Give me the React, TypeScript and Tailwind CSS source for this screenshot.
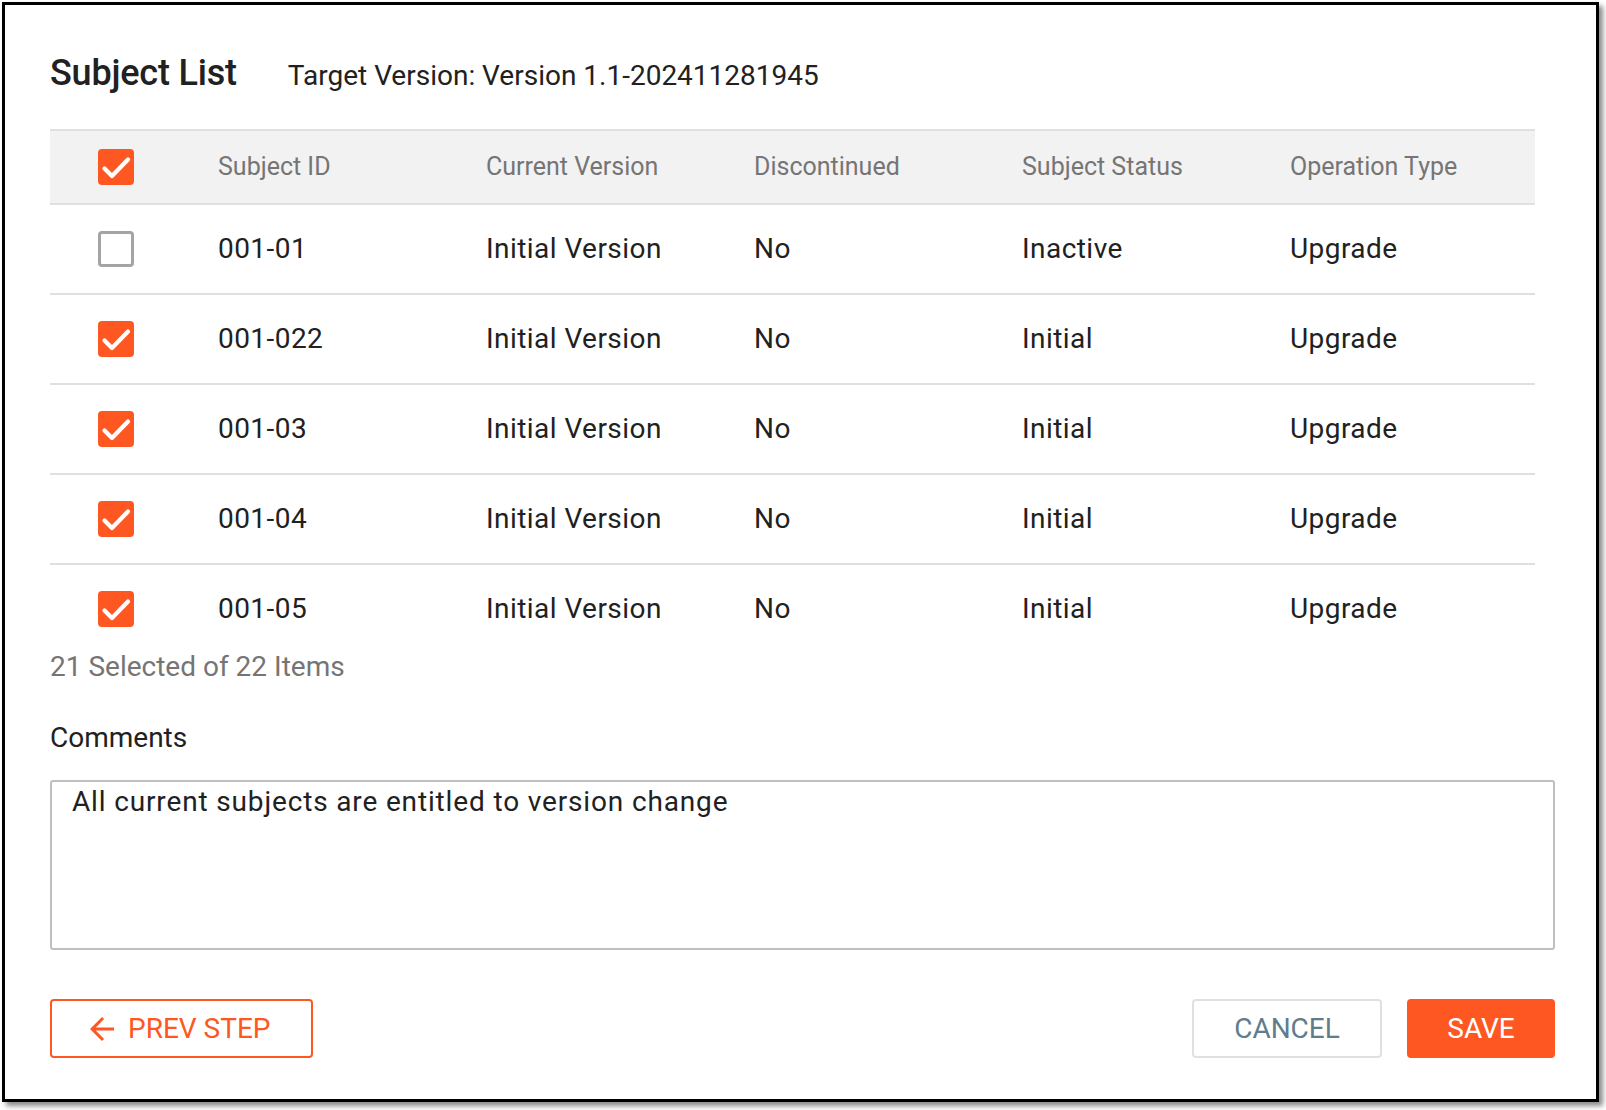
import { useState } from "react"

type Subject = {
  id: string
  version: string
  discontinued: string
  status: string
  operation: string
  selected: boolean
}

const subjects: Subject[] = [
  { id: "001-01", version: "Initial Version", discontinued: "No", status: "Inactive", operation: "Upgrade", selected: false },
  { id: "001-022", version: "Initial Version", discontinued: "No", status: "Initial", operation: "Upgrade", selected: true },
  { id: "001-03", version: "Initial Version", discontinued: "No", status: "Initial", operation: "Upgrade", selected: true },
  { id: "001-04", version: "Initial Version", discontinued: "No", status: "Initial", operation: "Upgrade", selected: true },
  { id: "001-05", version: "Initial Version", discontinued: "No", status: "Initial", operation: "Upgrade", selected: true },
]

function Checkbox({ checked, onToggle }: { checked: boolean; onToggle: () => void }) {
  return (
    <button
      type="button"
      onClick={onToggle}
      className={
        checked
          ? "w-[36px] h-[36px] rounded-[4px] bg-[#ff5722] flex items-center justify-center"
          : "w-[36px] h-[36px] rounded-[4px] border-[3px] border-[#a4a4a4] bg-white"
      }
    >
      {checked && (
        <svg width="36" height="36" viewBox="0 0 36 36" fill="none">
          <polyline points="6.5,19.5 14,27 30,10.5" stroke="white" strokeWidth="4.2" strokeLinecap="round" strokeLinejoin="round" />
        </svg>
      )}
    </button>
  )
}

const cols = "grid grid-cols-[168px_268px_268px_268px_268px_1fr] items-center"

export default function App() {
  const [rows, setRows] = useState(subjects)
  const [comment, setComment] = useState("All current subjects are entitled to version change")
  const allChecked = rows.every((r) => r.selected)

  return (
    <div className="w-[1606px] h-[1110px] bg-white p-[2px] font-['Roboto','Liberation_Sans',sans-serif]">
      {/* Dialog frame */}
      <div className="w-[1597px] h-[1100px] border-[3px] border-black bg-white shadow-[4px_4px_5px_rgba(0,0,0,0.45)] pt-[48px] pl-[45px] pr-[41px] pb-[40px] flex flex-col">
        {/* Title */}
        <div className="flex items-baseline leading-[40px]">
          <h1 className="text-[36px] font-medium text-[#212121] tracking-[-0.2px]">Subject List</h1>
          <span className="ml-[51px] text-[28px] text-[#212121]">Target Version: Version 1.1-202411281945</span>
        </div>

        <div className="mt-[33px] h-[517px] overflow-hidden pr-[20px]">
          <div className={`${cols} h-[76px] bg-[#f2f2f2] border-y-2 border-[#e0e0e0] text-[25px] text-[#757575]`}>
            <div className="pl-[48px] flex">
              <Checkbox
                checked={true}
                onToggle={() => setRows(rows.map((r) => ({ ...r, selected: !allChecked })))}
              />
            </div>
            <div>Subject ID</div>
            <div>Current Version</div>
            <div>Discontinued</div>
            <div>Subject Status</div>
            <div>Operation Type</div>
          </div>
          {rows.map((r, i) => (
            <div key={r.id} className={`${cols} h-[90px] border-b-2 border-[#e0e0e0] text-[28px] text-[#212121] tracking-[0.45px]`}>
              <div className="pl-[48px] flex">
                <Checkbox
                  checked={r.selected}
                  onToggle={() => setRows(rows.map((x, j) => (j === i ? { ...x, selected: !x.selected } : x)))}
                />
              </div>
              <div>{r.id}</div>
              <div>{r.version}</div>
              <div>{r.discontinued}</div>
              <div>{r.status}</div>
              <div>{r.operation}</div>
            </div>
          ))}
        </div>

        <div className="text-[28px] leading-[42px] text-[#757575]">21 Selected of 22 Items</div>

        {/* Comments */}
        <div className="mt-[29px] text-[28px] leading-[42px] text-[#212121]">Comments</div>
        <textarea
          value={comment}
          onChange={(e) => setComment(e.target.value)}
          className="mt-[21px] h-[170px] w-full resize-none border-2 border-[#bfbfbf] rounded-[3px] px-[20px] pt-[3px] text-[28px] leading-[33px] text-[#212121] tracking-[0.85px] outline-none font-['Roboto','Liberation_Sans',sans-serif]"
        />

        {/* Footer */}
        <div className="mt-[49px] flex items-center justify-between">
          <button
            type="button"
            className="w-[263px] h-[59px] border-2 border-[#ff5722] rounded-[4px] flex items-center pl-[32px] text-[28px] text-[#ff5722]"
          >
            <svg width="36" height="36" viewBox="0 0 24 24" fill="#ff5722">
              <path d="M20 11H7.83l5.59-5.59L12 4l-8 8 8 8 1.41-1.41L7.83 13H20v-2z" />
            </svg>
            <span className="ml-[8px]">PREV STEP</span>
          </button>
          <div className="flex items-center gap-[25px]">
            <button
              type="button"
              className="w-[190px] h-[59px] border-2 border-[#e0e0e0] rounded-[4px] text-[28px] text-[#607d8b]"
            >
              CANCEL
            </button>
            <button type="button" className="w-[148px] h-[59px] rounded-[4px] bg-[#ff5722] text-[28px] text-white">
              SAVE
            </button>
          </div>
        </div>
      </div>
    </div>
  )
}
